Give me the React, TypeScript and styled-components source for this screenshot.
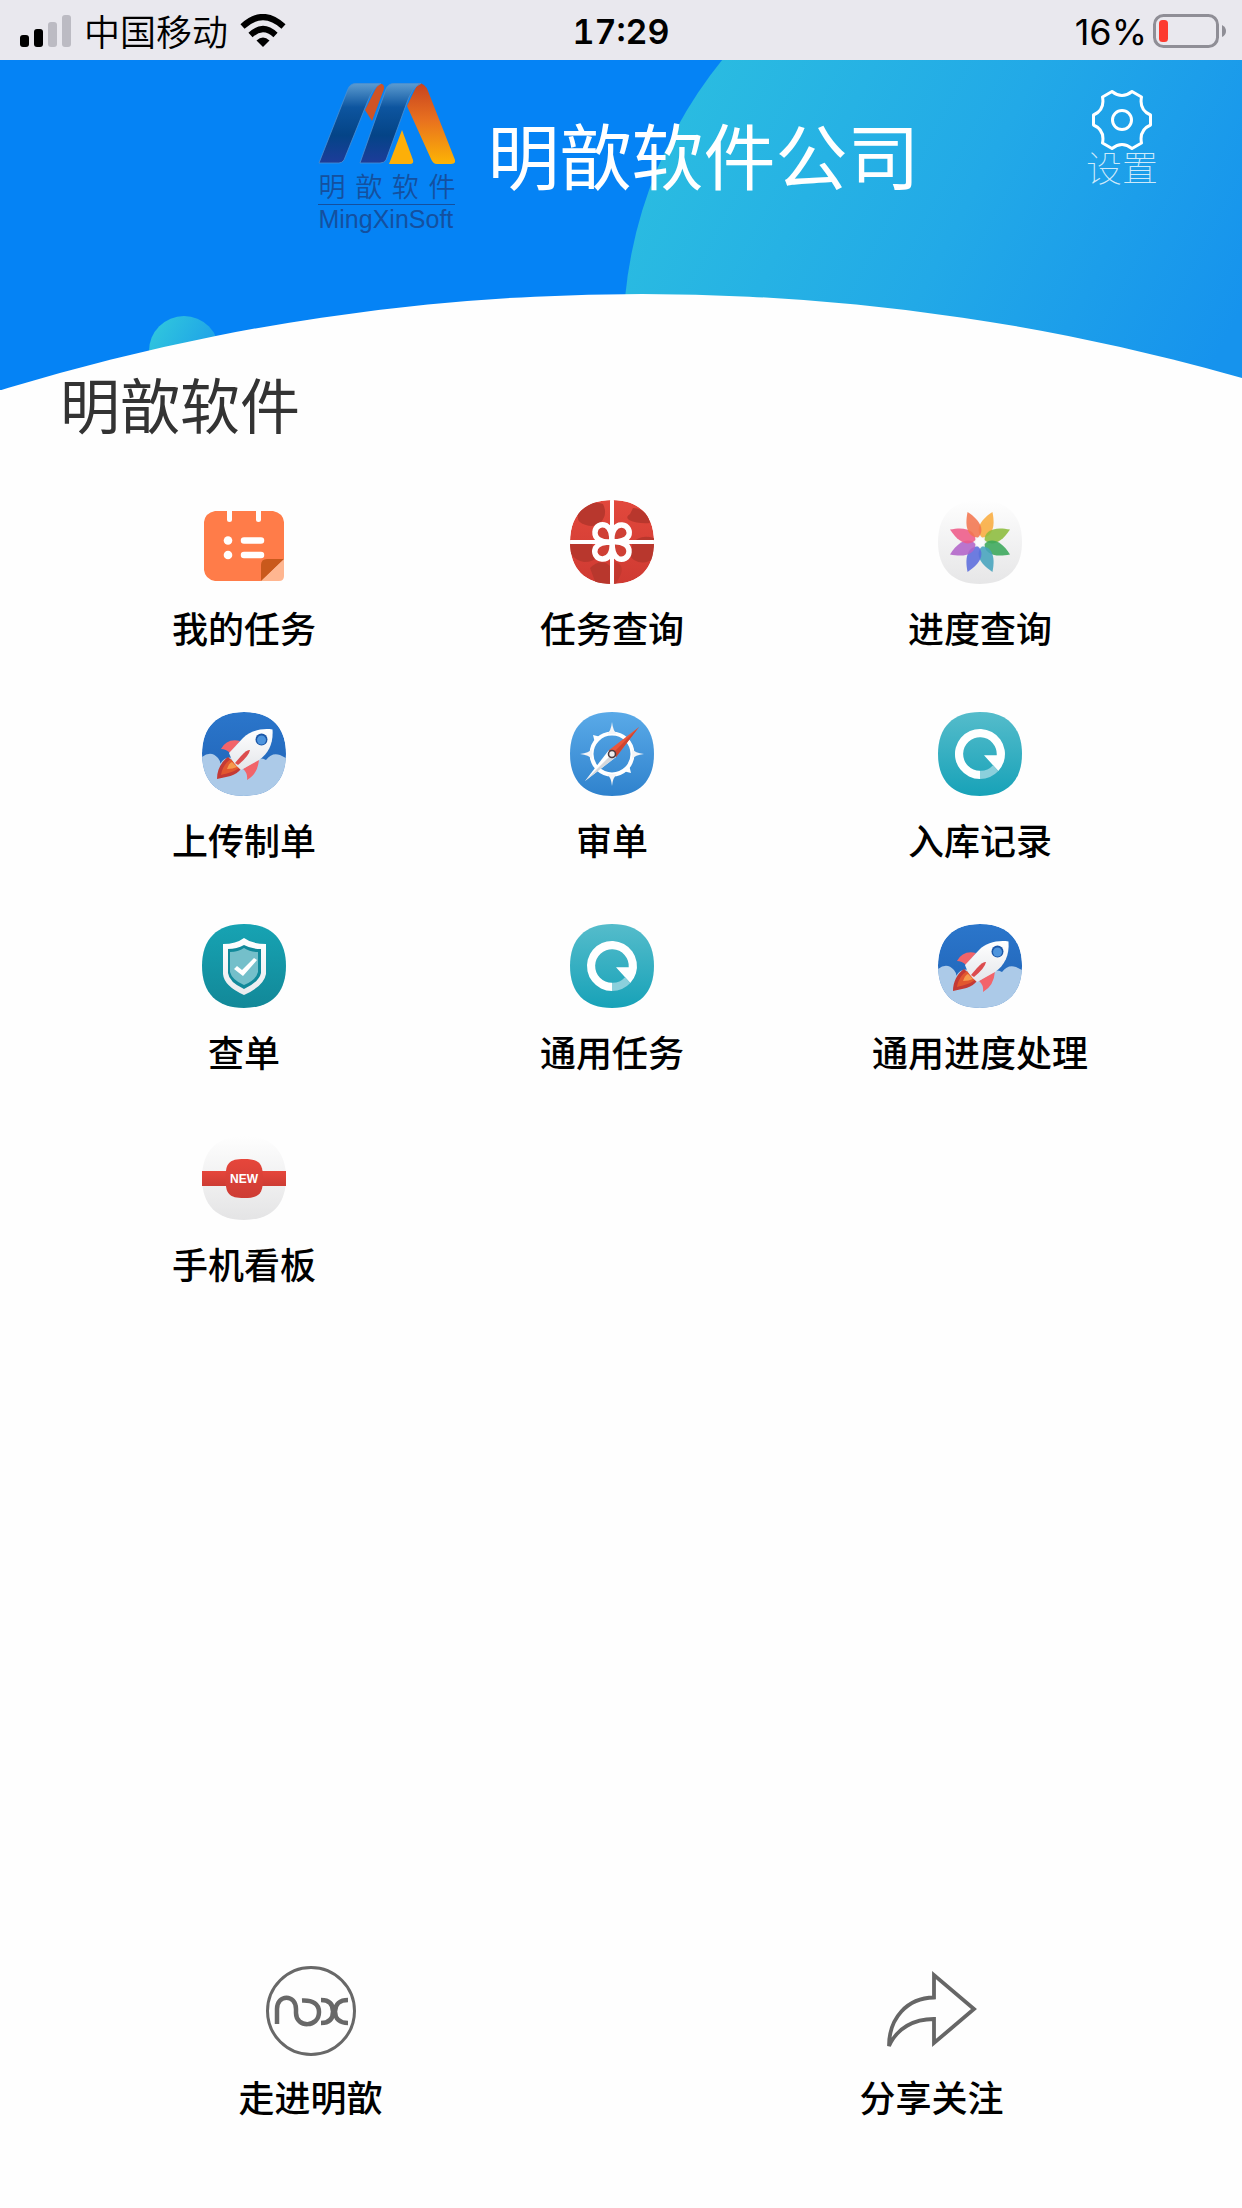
import React from 'react';
import styled, { createGlobalStyle } from 'styled-components';

const GlobalStyle = createGlobalStyle`
  *, *::before, *::after { box-sizing: border-box; }
  body {
    margin: 0;
    background: #fefefe;
    font-family: Inter, "Noto Sans CJK SC", sans-serif;
    color: #000;
  }
  svg { display: block; flex: none; }
`;

const Page = styled.div`
  display: flex;
  flex-direction: column;
  min-height: 100vh;
`;

/* ---------- status bar ---------- */

const StatusBar = styled.div`
  display: grid;
  grid-template-columns: 1fr auto 1fr;
  align-items: center;
  height: 60px;
  padding: 0 16px;
  background: #e9e8ee;
  font-size: 36px;
  line-height: 60px;
`;

const StatusGroup = styled.div<{ $end?: boolean; $gap: number }>`
  display: flex;
  align-items: center;
  justify-content: ${(p) => (p.$end ? 'flex-end' : 'flex-start')};
  gap: ${(p) => p.$gap}px;
  padding-left: 4px;
`;

const Carrier = styled.span`
  font-family: "Noto Sans CJK SC", sans-serif;
  font-weight: 350;
  line-height: 56px;
  padding-bottom: 2px;
`;

const Clock = styled.time`
  font-size: 34px;
  font-weight: 600;
  font-variant-numeric: tabular-nums;
  padding-top: 2px;
`;

const BatteryLevel = styled.span`
  padding-top: 2px;
`;

/* ---------- header ---------- */

const Header = styled.header`
  position: relative;
  display: grid;
  grid-template-columns: 1fr auto 1fr;
  align-items: start;
  height: 312px;
  padding: 23px 84px 0 80px;
`;

const HeaderArt = styled.svg`
  position: absolute;
  top: 0;
  left: 0;
  width: 100%;
  height: 330px;
  z-index: -1;
`;

const Brand = styled.div`
  grid-column: 2;
  display: flex;
  gap: 32px;
`;

const Logo = styled.div`
  display: flex;
  flex-direction: column;
  width: 137px;
  color: #14509f;
`;

const LogoName = styled.span`
  margin-top: 4px;
  border-bottom: 1px solid #14509f;
  font-family: "Noto Sans CJK SC", sans-serif;
  font-size: 27px;
  font-weight: 350;
  line-height: 36px;
  text-align-last: justify;
`;

const LogoLatin = styled.span`
  font-family: "Liberation Sans", Arial, sans-serif;
  font-size: 25px;
  line-height: 28px;
`;

const CompanyName = styled.h1`
  margin: 18px 0 0;
  font-family: "Noto Sans CJK SC", sans-serif;
  font-size: 72px;
  font-weight: 400;
  line-height: 104px;
  color: #fff;
  white-space: nowrap;
`;

const SettingsButton = styled.button`
  grid-column: 3;
  justify-self: end;
  display: flex;
  flex-direction: column;
  align-items: center;
  margin-top: 7px;
  padding: 0;
  border: 0;
  background: none;
  color: rgba(255, 255, 255, 0.8);
  font-family: "Noto Sans CJK SC", sans-serif;
  font-size: 36px;
  font-weight: 100;
  line-height: 32px;
  cursor: pointer;
`;

/* ---------- content ---------- */

const SectionTitle = styled.h2`
  margin: 0 60px;
  font-family: "Noto Sans CJK SC", sans-serif;
  font-size: 60px;
  font-weight: 400;
  line-height: 62px;
  color: #333;
`;

const MenuGrid = styled.nav`
  display: grid;
  grid-template-columns: repeat(3, 1fr);
  row-gap: 58px;
  padding: 66px 78px 58px 60px;
`;

const Tile = styled.button<{ $gap: number }>`
  display: flex;
  flex-direction: column;
  align-items: center;
  gap: ${(p) => p.$gap}px;
  padding: 0;
  border: 0;
  background: none;
  color: #000;
  font-family: "Noto Sans CJK SC", sans-serif;
  font-size: 36px;
  font-weight: 500;
  line-height: 54px;
  white-space: nowrap;
  cursor: pointer;
`;

const Footer = styled.footer`
  display: grid;
  grid-template-columns: repeat(2, 1fr);
  margin-top: auto;
  padding-bottom: 85px;
`;

/* ---------- icons ---------- */

const SQUIRCLE = 'M42 0C69 0 84 15 84 42S69 84 42 84S0 69 0 42S15 0 42 0Z';

const AppIcon = ({ children }: { children: React.ReactNode }) => (
  <svg width="84" height="84" viewBox="0 0 84 84" aria-hidden="true">
    {children}
  </svg>
);

const Gradient = ({ id, from, to }: { id: string; from: string; to: string }) => (
  <linearGradient id={id} x1="0" y1="0" x2="0" y2="1">
    <stop offset="0" stopColor={from} />
    <stop offset="1" stopColor={to} />
  </linearGradient>
);

const TaskIcon = () => (
  <AppIcon>
    <path
      d="M13 11H25V19.500a2.500 2.500 0 0 0 5 0V11H54V19.500a2.500 2.500 0 0 0 5 0V11H71Q81 13 82 22V59L59 81H13Q3 79 2 70V22Q3 13 13 11Z"
      fill="#ff7c49"
    />
    <path d="M59 81L82 59V76Q82 81 77 81Z" fill="#ffb690" />
    <path d="M59 81V65Q59 59 65 59H82Z" fill="#c9591c" />
    <circle cx="26" cy="40.500" r="4.300" fill="#fff" />
    <circle cx="26" cy="55" r="4.300" fill="#fff" />
    <path d="M42 40.500H59M42 55H59" stroke="#fff" strokeWidth="6.500" strokeLinecap="round" />
  </AppIcon>
);

const GiftIcon = () => (
  <AppIcon>
    <defs>
      <Gradient id="giftRed" from="#e2483c" to="#cf3a32" />
      <clipPath id="giftClip">
        <path d={SQUIRCLE} />
      </clipPath>
    </defs>
    <g clipPath="url(#giftClip)">
      <path d={SQUIRCLE} fill="url(#giftRed)" />
      <g fill="#b8372d">
        <path d="M14 6Q24 0 33 4Q38 14 31 22Q24 28 16 25Q6 23 8 14Z" />
        <path d="M63 8Q72 8 78 16L80 23Q68 24 59 20Q55 17 60 14Z" />
        <path d="M0 43H22Q23 51 28 56Q24 62 14 62Q4 60 0 52Z" />
        <path d="M62 44Q69 34 84 38V58Q74 66 64 60Q58 56 62 50Z" />
        <path d="M20 68Q28 60 36 63L40 66V84H26Z" />
        <path d="M45 62Q54 64 51 74L46 84H44Z" opacity=".6" />
      </g>
      <path d="M42 0V84M0 42H84" stroke="#fff" strokeWidth="4" />
      {[0, 90, 180, 270].map((angle) => (
        <path
          key={angle}
          transform={`rotate(${angle} 42 42)`}
          d="M42 42C31 43 24.500 38.500 25 32C25.500 26 31 23.500 36 25.500C41 28 42 35 42 42Z"
          fill="#cf4035"
          stroke="#fff"
          strokeWidth="5.500"
        />
      ))}
    </g>
  </AppIcon>
);

const PETALS = ['#f9ac3f', '#8cbc3c', '#3aa75a', '#46a3bd', '#5b6cdd', '#b263c8', '#ee5a88', '#f2754f'];

const FlowerIcon = () => (
  <AppIcon>
    <defs>
      <Gradient id="flowerBase" from="#fefefe" to="#e6e6e7" />
    </defs>
    <path d={SQUIRCLE} fill="url(#flowerBase)" />
    {PETALS.map((color, i) => (
      <path
        key={color}
        transform={`translate(42 42) rotate(${22.5 + i * 45})`}
        d="M0 -5C-8 -8 -10 -18 0 -32.500C10 -18 8 -8 0 -5Z"
        fill={color}
        opacity=".88"
      />
    ))}
    <circle cx="42" cy="42" r="4.500" fill="#fbfbfb" />
  </AppIcon>
);

const RocketIcon = ({ id }: { id: string }) => (
  <AppIcon>
    <defs>
      <Gradient id={`${id}Sky`} from="#2b76cb" to="#1f62b5" />
      <Gradient id={`${id}Body`} from="#ffffff" to="#e4e6ea" />
      <clipPath id={`${id}Clip`}>
        <path d={SQUIRCLE} />
      </clipPath>
    </defs>
    <g clipPath={`url(#${id}Clip)`}>
      <path d={SQUIRCLE} fill={`url(#${id}Sky)`} />
      <path
        d="M0 45Q9 38 16 46Q19 50 18 52Q23 44 31 46L52 51Q56 44 64 48Q70 40 78 43L84 46V84H0Z"
        fill="#accae8"
      />
      <path d="M15 67C15 58 19 50 26 45L39 57C34 64 24 65 15 67Z" fill="#c43a35" />
      <path d="M19 63C20 56 24 50 29 47L37 56C32 60 26 61 19 63Z" fill="#e2572f" />
      <path d="M25 57Q27 51 30 50L35 55Q31 57 25 57Z" fill="#f69a4d" />
      <path d="M19 37Q25 26 38 29L28 41Q24 37 19 37Z" fill="#f2646a" />
      <path d="M57 47Q56 62 45 68Q46 61 41 57Z" fill="#f2646a" />
      <path d="M70.500 17.500C59 16 48 19 41 26L27 41Q30 51 39 58L57 48C67 41 71.500 31 70.500 17.500Z" fill={`url(#${id}Body)`} />
      <path d="M48 38Q45 37 39 44L33 51L36 53Q47 44 48 38Z" fill="#dc4c4e" />
      <circle cx="59.500" cy="27.500" r="6" fill="#1b57a8" />
      <circle cx="59.500" cy="28" r="4.500" fill="#4d94dd" />
    </g>
  </AppIcon>
);

const CompassIcon = () => (
  <AppIcon>
    <defs>
      <Gradient id="compassBase" from="#5aaae8" to="#2f82cd" />
    </defs>
    <path d={SQUIRCLE} fill="url(#compassBase)" />
    <circle cx="42" cy="42" r="20.500" fill="none" stroke="#fff" strokeWidth="4" />
    {[0, 90, 180, 270].map((angle) => (
      <path key={angle} transform={`rotate(${angle} 42 42)`} d="M42 10Q43 19 47 22H37Q41 19 42 10Z" fill="#f4f5f7" />
    ))}
    <path d="M23 23L31 25L25 31ZM61 61L53 59L59 53Z" fill="#fff" />
    <path d="M69 15L46 45L38.500 38.500Z" fill="#e9573c" />
    <path d="M69 15L46 45L42 42Z" fill="#cf4530" />
    <path d="M15 69L38.500 38.500L46 45Z" fill="#fff" />
    <path d="M15 69L42 42L46 45Z" fill="#d5d8dc" />
    <circle cx="42" cy="42" r="3.500" fill="#eee" stroke="#4c3b3f" strokeWidth="1.600" />
  </AppIcon>
);

const RingIcon = ({ id }: { id: string }) => (
  <AppIcon>
    <defs>
      <Gradient id={id} from="#55bccb" to="#17a2b8" />
    </defs>
    <path d={SQUIRCLE} fill={`url(#${id})`} />
    <path d="M42 67A25 25 0 1 1 60.300 59L46 43.300H58.700A16.800 16.800 0 1 0 42 58.800Z" fill="#fff" />
    <path d="M42 67A25 25 0 0 0 60.300 59L55 53.200A16.800 16.800 0 0 1 42 58.800Z" fill="#8bd0dc" />
  </AppIcon>
);

const ShieldIcon = () => (
  <AppIcon>
    <defs>
      <Gradient id="shieldBase" from="#17a3b3" to="#128898" />
      <Gradient id="shieldRim" from="#ffffff" to="#e9ebee" />
    </defs>
    <path d={SQUIRCLE} fill="url(#shieldBase)" />
    <path d="M42 14Q50 20 64 20V50Q62 62 42 71Q22 62 21 50V20Q34 20 42 14Z" fill="url(#shieldRim)" />
    <path d="M42 21Q49 25 59 25V49Q57 58 42 65Q27 58 26 49V25Q35 25 42 21Z" fill="#11899a" />
    <path d="M42 24Q48 28 56 28V48Q54 56 42 61Q30 56 28 48V28Q36 28 42 24Z" fill="#74bfca" />
    <path d="M32 45L35 42L40 46L52 34L55 36L41 52Z" fill="#fff" />
  </AppIcon>
);

const NewIcon = () => (
  <AppIcon>
    <defs>
      <Gradient id="newBase" from="#fefefe" to="#e4e4e5" />
      <Gradient id="newRed" from="#e6463b" to="#cd3c34" />
    </defs>
    <path d={SQUIRCLE} fill="url(#newBase)" />
    <rect y="35" width="84" height="15" fill="url(#newRed)" />
    <path d="M42 23C57 23 61 27 61 42.500S57 62 42 62S23.500 58 23.500 42.500S27 23 42 23Z" fill="url(#newRed)" />
    <text
      x="42"
      y="47"
      textAnchor="middle"
      fill="#fff"
      fontFamily='"Liberation Sans", Arial, sans-serif'
      fontSize="12"
      fontWeight="700"
    >
      NEW
    </text>
  </AppIcon>
);

const GearIcon = () => (
  <svg width="60" height="60" viewBox="0 0 60 60" fill="none" stroke="#fff" strokeWidth="3" strokeLinejoin="round" aria-hidden="true">
    <path d="M20 1.500Q30 9.500 40 1.500L49.500 7Q47 20 58.500 25V35Q47 40 49.500 53L40 58.500Q30 50.500 20 58.500L10.500 53Q13 40 1.500 35V25Q13 20 10.500 7Z" />
    <circle cx="30" cy="30" r="9.500" />
  </svg>
);

const NoxIcon = () => (
  <svg width="90" height="90" viewBox="0 0 90 90" fill="none" stroke="#686868" aria-hidden="true">
    <circle cx="45" cy="45" r="43.500" strokeWidth="3" />
    <path
      d="M11 58V43C11 28 30 28 30 43V47C30 62 53 62 53 46C53 38 47 34 36 34.500M55 34C63 34 67 38 67 45.500S63 57 55 57M82 34C74 34 69 38 69 45.500S74 57 82 57"
      strokeWidth="4.500"
    />
  </svg>
);

const ShareIcon = () => (
  <svg width="90" height="90" viewBox="0 0 90 90" fill="none" stroke="#666" strokeWidth="3.800" aria-hidden="true">
    <path d="M2 80C2 52 20 32 47 31.500V9L87 43L47 77V53C27 53 10 62 2 80Z" />
  </svg>
);

const SignalIcon = () => (
  <svg width="52" height="32" viewBox="0 0 52 32" aria-hidden="true">
    <rect y="20" width="9" height="12" rx="3" />
    <rect x="14" y="14" width="9" height="18" rx="3" />
    <rect x="28" y="7" width="9" height="25" rx="3" fill="#bcbbc3" />
    <rect x="42" width="9" height="32" rx="3" fill="#bcbbc3" />
  </svg>
);

const WifiIcon = () => (
  <svg width="46" height="34" viewBox="0 0 46 34" aria-hidden="true">
    <path d="M2.500 12.500Q23 -6.500 43.500 12.500M10.500 21Q23 9 35.500 21" fill="none" stroke="#000" strokeWidth="6" />
    <path d="M23 33L16.500 26.500Q23 20.500 29.500 26.500Z" />
  </svg>
);

const BatteryIcon = () => (
  <svg width="73" height="34" viewBox="0 0 73 34" aria-hidden="true">
    <rect x="1.500" y="1.500" width="63" height="31" rx="9" fill="none" stroke="#8f8e96" strokeWidth="3" />
    <rect x="6" y="6" width="9" height="22" rx="3.500" fill="#fd3b30" />
    <path d="M69 11Q73 13 73 17T69 23Z" fill="#8f8e96" />
  </svg>
);

const LogoMark = () => (
  <svg width="137" height="81" viewBox="0 0 137 81" aria-hidden="true">
    <defs>
      <linearGradient id="logoBlue" x1="0" y1="0" x2="0" y2="1">
        <stop offset="0" stopColor="#5b9bd0" />
        <stop offset=".3" stopColor="#0d559f" />
        <stop offset=".65" stopColor="#044487" />
        <stop offset="1" stopColor="#1d3c9a" />
      </linearGradient>
      <linearGradient id="logoOrange" x1="0" y1="0" x2="0" y2="1">
        <stop offset="0" stopColor="#c64220" />
        <stop offset=".45" stopColor="#e8701f" />
        <stop offset="1" stopColor="#fdb404" />
      </linearGradient>
    </defs>
    <path d="M60 1Q67 0 66 6L54 38L47 27Z" fill="#cf5326" />
    <path d="M100 0Q107 0 110 8L137 77Q138 81 133 81H119Q115 81 113 76L89 23Z" fill="url(#logoOrange)" />
    <path d="M84 47L95 77Q96 81 92 81H71Z" fill="#fdaf08" />
    <g fill="url(#logoBlue)" stroke="#4c8fd0" strokeWidth=".8">
      <path d="M1 80L30 6Q32 .5 38 .5H63Q55 4 49 20L26 77Q24 80 21 80Z" />
      <path d="M42 80L68 6Q70 .5 76 .5H103Q94 4 88 22L68 77Q66 80 62 80Z" />
    </g>
  </svg>
);

const HeaderBackground = () => (
  <HeaderArt viewBox="0 0 1242 330" preserveAspectRatio="none" aria-hidden="true">
    <defs>
      <linearGradient id="bigDisc" gradientUnits="userSpaceOnUse" x1="680" y1="60" x2="1200" y2="330">
        <stop offset="0" stopColor="#2abbe1" />
        <stop offset=".5" stopColor="#22a9e7" />
        <stop offset="1" stopColor="#1693ed" />
      </linearGradient>
      <linearGradient id="smallDisc" x1="0" y1="0" x2="1" y2="0.600">
        <stop offset="0" stopColor="#32cbdc" />
        <stop offset="1" stopColor="#1b9bea" />
      </linearGradient>
    </defs>
    <rect width="1242" height="330" fill="#0583f5" />
    <circle cx="1068" cy="280" r="445" fill="url(#bigDisc)" />
    <circle cx="184" cy="291" r="35" fill="url(#smallDisc)" />
    <circle cx="642" cy="2419" r="2185" fill="#fefefe" />
  </HeaderArt>
);

const MENU = [
  { label: '我的任务', icon: <TaskIcon /> },
  { label: '任务查询', icon: <GiftIcon /> },
  { label: '进度查询', icon: <FlowerIcon /> },
  { label: '上传制单', icon: <RocketIcon id="upload" /> },
  { label: '审单', icon: <CompassIcon /> },
  { label: '入库记录', icon: <RingIcon id="stockRing" /> },
  { label: '查单', icon: <ShieldIcon /> },
  { label: '通用任务', icon: <RingIcon id="taskRing" /> },
  { label: '通用进度处理', icon: <RocketIcon id="progress" /> },
  { label: '手机看板', icon: <NewIcon /> },
];

export default function App() {
  return (
    <>
      <GlobalStyle />
      <Page>
        <StatusBar>
          <StatusGroup $gap={12}>
            <SignalIcon />
            <Carrier>中国移动</Carrier>
            <WifiIcon />
          </StatusGroup>
          <Clock>17:29</Clock>
          <StatusGroup $end $gap={6}>
            <BatteryLevel>16%</BatteryLevel>
            <BatteryIcon />
          </StatusGroup>
        </StatusBar>

        <Header>
          <HeaderBackground />
          <Brand>
            <Logo>
              <LogoMark />
              <LogoName>明歆软件</LogoName>
              <LogoLatin>MingXinSoft</LogoLatin>
            </Logo>
            <CompanyName>明歆软件公司</CompanyName>
          </Brand>
          <SettingsButton type="button">
            <GearIcon />
            设置
          </SettingsButton>
        </Header>

        <main>
          <SectionTitle>明歆软件</SectionTitle>
          <MenuGrid>
            {MENU.map((item) => (
              <Tile key={item.label} type="button" $gap={16}>
                {item.icon}
                {item.label}
              </Tile>
            ))}
          </MenuGrid>
        </main>

        <Footer>
          <Tile type="button" $gap={13}>
            <NoxIcon />
            走进明歆
          </Tile>
          <Tile type="button" $gap={13}>
            <ShareIcon />
            分享关注
          </Tile>
        </Footer>
      </Page>
    </>
  );
}
